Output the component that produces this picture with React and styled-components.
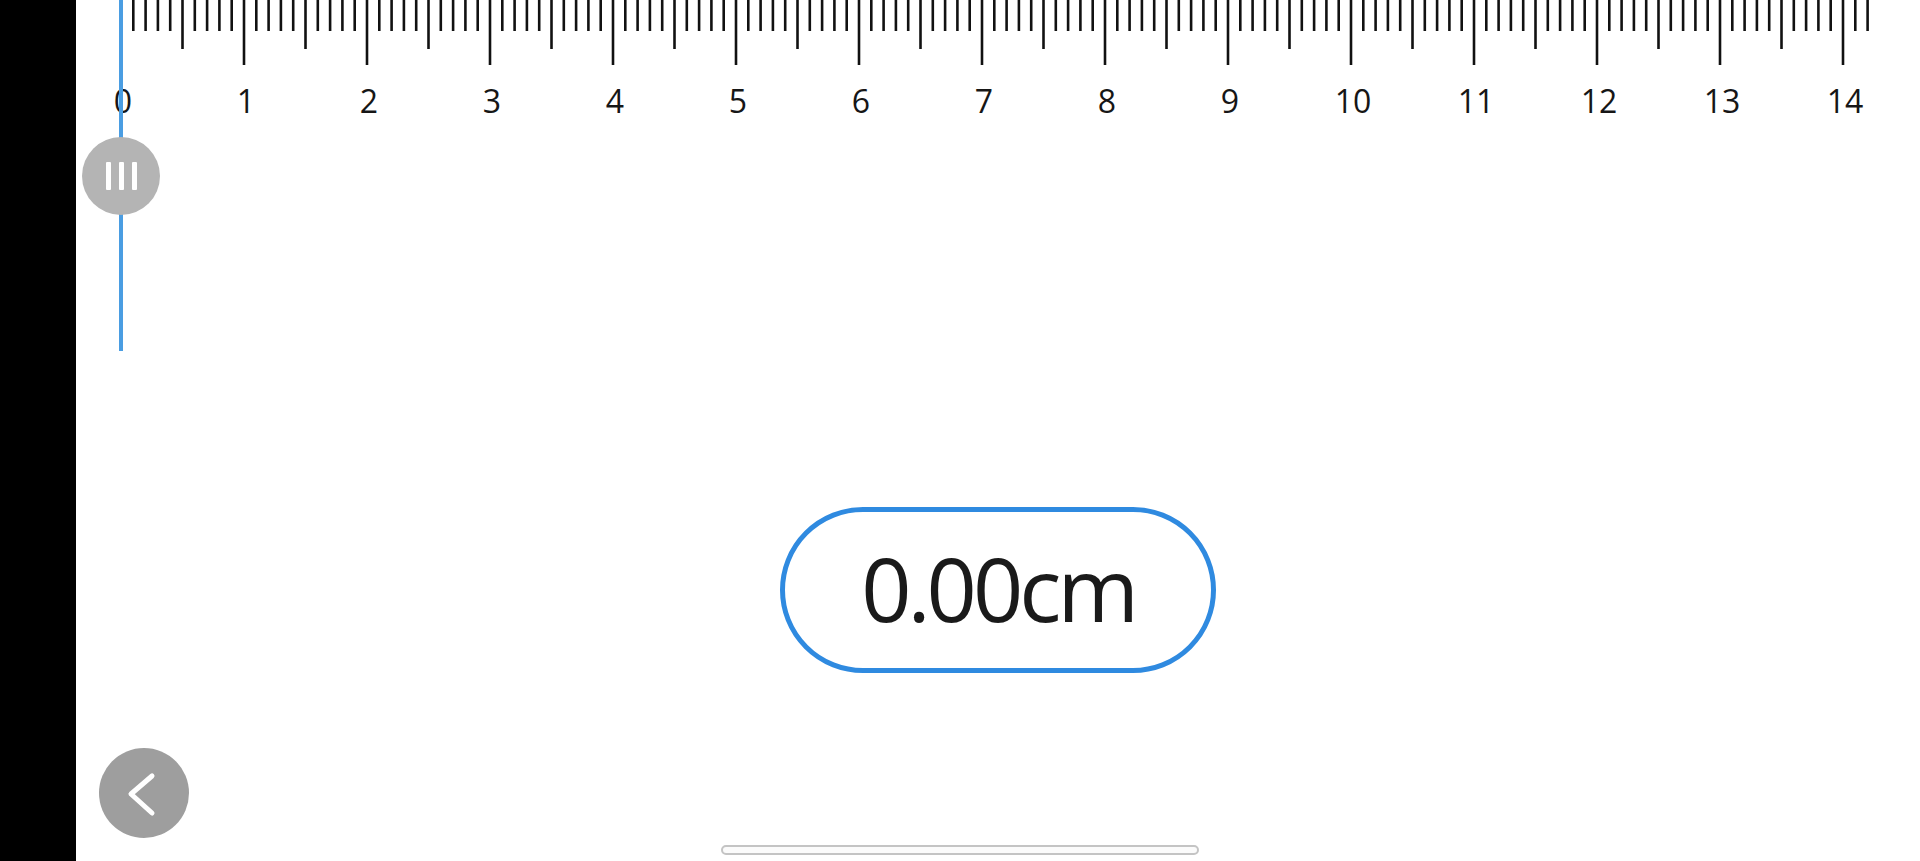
import React from 'react';
import styled, {createGlobalStyle} from 'styled-components';

const MM = 12.3;
const ORIGIN = 45;
const TOTAL_MM = 142;

const GlobalStyle = createGlobalStyle`
  html, body {
    margin: 0;
    padding: 0;
    background: #fff;
    overflow: hidden;
  }
  body {
    font-family: "Open Sans", "Liberation Sans", sans-serif;
  }
`;

const Screen = styled.div`
  width: 1920px;
  height: 861px;
  display: flex;
  position: relative;
  background: #fff;
`;

const Sidebar = styled.div`
  width: 76px;
  flex-shrink: 0;
  background: #000;
`;

const Main = styled.div`
  flex: 1;
  display: flex;
  flex-direction: column;
`;

const RulerArea = styled.div`
  position: relative;
  height: 351px;
`;

const RulerSvg = styled.svg`
  display: block;
`;

const Label = styled.text`
  font-family: "Open Sans", "Liberation Sans", sans-serif;
  font-size: 32px;
  fill: #161616;
`;

const Marker = styled.div`
  position: absolute;
  left: ${ORIGIN - 2}px;
  top: 0;
  width: 4px;
  height: 351px;
  background: #4a9de2;
`;

const Handle = styled.div`
  position: absolute;
  left: ${ORIGIN - 39}px;
  top: 137px;
  width: 78px;
  height: 78px;
  border-radius: 50%;
  background: #b4b4b4;
  display: flex;
  align-items: center;
  justify-content: center;
  gap: 8px;
`;

const Grip = styled.span`
  width: 5px;
  height: 28px;
  border-radius: 1px;
  background: #fff;
`;

const PillRow = styled.div`
  display: flex;
  justify-content: center;
  margin-top: 156px;
`;

const Pill = styled.div`
  box-sizing: border-box;
  width: 436px;
  height: 166px;
  border: 5px solid #2f8ae0;
  border-radius: 83px;
  display: flex;
  align-items: center;
  justify-content: center;
  font-size: 88px;
  letter-spacing: -4px;
  color: #1a1a1a;
  padding-bottom: 4px;
`;

const Footer = styled.div`
  display: flex;
  margin-top: 75px;
  padding-left: 23px;
`;

const BackButton = styled.button`
  width: 90px;
  height: 90px;
  border-radius: 50%;
  border: none;
  padding: 0;
  background: #9e9e9e;
  display: flex;
  align-items: center;
  justify-content: center;
`;

const HomeBar = styled.div`
  position: absolute;
  left: 721px;
  bottom: 6px;
  width: 478px;
  height: 10px;
  box-sizing: border-box;
  border: 2px solid #c4c4c4;
  border-radius: 6px;
  background: #fbfbfb;
`;

const Ruler = () => {
  const ticks = [];
  const labels = [];
  for (let i = 0; i <= TOTAL_MM; i++) {
    const x = ORIGIN + i * MM;
    const len = i % 10 === 0 ? 65 : i % 5 === 0 ? 49 : 31;
    ticks.push(<line key={i} x1={x} x2={x} y1={0} y2={len} stroke="#111" strokeWidth="2.6" />);
    if (i % 10 === 0) {
      labels.push(
        <Label key={'l' + i} x={x + 2} y={113} textAnchor="middle">{i / 10}</Label>
      );
    }
  }
  return (
    <RulerSvg width="1844" height="130" viewBox="0 0 1844 130">
      {ticks}
      {labels}
    </RulerSvg>
  );
};

export default function App() {
  return (
    <Screen>
      <GlobalStyle />
      <Sidebar />
      <Main>
        <RulerArea>
          <Ruler />
          <Marker />
          <Handle>
            <Grip />
            <Grip />
            <Grip />
          </Handle>
        </RulerArea>
        <PillRow>
          <Pill>0.00cm</Pill>
        </PillRow>
        <Footer>
          <BackButton aria-label="back">
            <svg width="90" height="90" viewBox="0 0 90 90">
              <path d="M53 28 L32 46 L53 65" fill="none" stroke="#fff" strokeWidth="5" strokeLinecap="round" strokeLinejoin="round" />
            </svg>
          </BackButton>
        </Footer>
      </Main>
      <HomeBar />
    </Screen>
  );
}
